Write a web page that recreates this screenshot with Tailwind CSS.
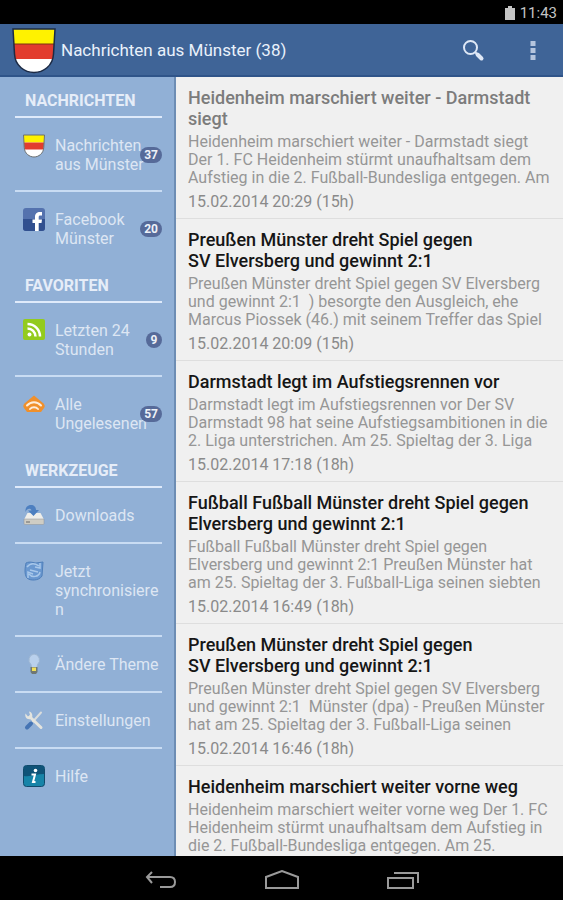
<!DOCTYPE html>
<html lang="de">
  <head>
    <meta charset="UTF-8" />
    <meta name="viewport" content="width=device-width, initial-scale=1.0" />
    <title>Nachrichten aus Münster</title>
    <script src="https://cdn.jsdelivr.net/npm/@tailwindcss/browser@4"></script>
  </head>
  <body class="h-screen flex flex-col overflow-hidden bg-black font-[Roboto,sans-serif]">
    <!-- status bar -->
    <div class="h-6 shrink-0 flex items-center justify-end gap-1 pr-1.5 pt-0.5 text-[15px] text-[#c4c4c4]">
      <svg class="w-3 h-4" viewBox="0 0 12 16" fill="#c4c4c4" aria-hidden="true">
        <path d="M4 1h4v2h3v12H1V3h3z" />
      </svg>
      <span>11:43</span>
    </div>

    <header class="h-[53px] shrink-0 flex items-center bg-[#3f6497] border-b-2 border-[#2f5489] pl-3 pr-1">
      <svg class="w-[44px] h-[48px]" viewBox="0 0 44 48" aria-hidden="true">
        <path d="M1 3h42l-1.500 25C41 40 31 46.500 22 46.500S3 40 2.500 28z" fill="#fff" />
        <path d="M1 3h42l-.9 15H1.900z" fill="#fff200" />
        <path d="M1.900 18h40.200l-.9 15H2.800z" fill="#e23c2e" />
        <path d="M1.900 18h40.200" stroke="#7a3410" />
        <path d="M1 3h42l-1.500 25C41 40 31 46.500 22 46.500S3 40 2.500 28z" fill="none" stroke="#1c2a44" stroke-width="1.500" />
      </svg>
      <h1 class="flex-1 pl-[5px] pt-0.5 text-[17px] text-[#e9f1fb]">Nachrichten aus Münster (38)</h1>
      <button class="w-[68px] h-12 flex items-center justify-center" aria-label="Suchen">
        <svg class="w-6 h-6" viewBox="0 0 24 24" fill="none" stroke="#dfe8f6" aria-hidden="true">
          <circle cx="9.500" cy="9.500" r="6.500" stroke-width="2" />
          <path d="M14 14l2.500 2.500" stroke-width="2" />
          <path d="M16.500 16.500l4 4" stroke-width="4" stroke-linecap="round" />
        </svg>
      </button>
      <button class="w-[52px] h-12 flex items-center justify-center" aria-label="Mehr Optionen">
        <svg class="w-[6px] h-5" viewBox="0 0 6 20" fill="#b5c5de" aria-hidden="true">
          <path d="M0.500 1h5v5h-5zM0.500 8h5v5h-5zM0.500 15h5v5h-5z" />
        </svg>
      </button>
    </header>

    <div class="flex-1 min-h-0 flex">
      <nav class="w-44 shrink-0 overflow-hidden bg-[#91b0d6] border-r-2 border-[#6d8db4] pl-[15px] pr-3 pt-1 text-base leading-[19px] text-[#dde6f3]">
        <h2 class="h-[37px] flex items-center pl-2.5 pt-1 border-b-2 border-[#dfeafa] font-bold text-[#e6edf8]">NACHRICHTEN</h2>
        <ul>
          <li class="border-b-2 border-[#c9dcf3]">
            <a href="#" class="relative flex gap-2.5 pl-2 pt-[18px] pb-4">
              <svg class="w-[22px] h-6 -mt-0.5 shrink-0" viewBox="0 0 44 48" aria-hidden="true">
                <path d="M1 2h42l-1.500 25C41 39 31 46 22 46S3 39 2.500 27z" fill="#fff" />
                <path d="M1 2h42l-.9 15H1.900z" fill="#fff200" />
                <path d="M1.900 17h40.200l-.9 14H2.800z" fill="#e23c2e" />
                <path d="M1 2h42l-1.500 25C41 39 31 46 22 46S3 39 2.500 27z" fill="none" stroke="#6b6f70" stroke-width="2" />
              </svg>
              <span class="flex-1 min-w-0 whitespace-nowrap">Nachrichten<br />aus Münster</span>
              <span class="absolute right-0 top-[29px] px-1 h-4 min-w-4 rounded-full bg-[#566a99] text-xs leading-4 font-bold text-center text-[#edf1f8]">37</span>
            </a>
          </li>
          <li>
            <a href="#" class="relative flex gap-2.5 pl-2 py-[18px]">
              <svg class="w-[22px] h-6 -mt-0.5 shrink-0" viewBox="0 0 22 24" aria-hidden="true">
                <rect x="0" y="0" width="22" height="23" rx="3" fill="#5472ae" />
                <path d="M0 11h22v9a3 3 0 0 1-3 3H3a3 3 0 0 1-3-3z" fill="#31508f" />
                <path d="M12 23v-8H9.500v-3.500H12V9c0-3.500 2-5 5-5h2v3.500h-1.500c-1.500 0-1.800.6-1.800 1.800v2.200H19l-.5 3.500h-2.800v8z" fill="#fff" />
              </svg>
              <span class="flex-1 min-w-0 whitespace-nowrap">Facebook<br />Münster</span>
              <span class="absolute right-0 top-[29px] px-1 h-4 min-w-4 rounded-full bg-[#566a99] text-xs leading-4 font-bold text-center text-[#edf1f8]">20</span>
            </a>
          </li>
        </ul>

        <h2 class="h-[37px] flex items-center pl-2.5 pt-1 border-b-2 border-[#dfeafa] font-bold text-[#e6edf8]">FAVORITEN</h2>
        <ul>
          <li class="border-b-2 border-[#c9dcf3]">
            <a href="#" class="relative flex gap-2.5 pl-2 pt-[18px] pb-4">
              <svg class="w-[22px] h-[22px] -mt-0.5 shrink-0" viewBox="0 0 22 22" fill="none" stroke="#fff" stroke-width="2.500" aria-hidden="true">
                <rect x="0" y="0" width="22" height="21" rx="2" fill="#93cb1e" stroke="none" />
                <circle cx="6.500" cy="15.500" r="2" fill="#fff" stroke="none" />
                <path d="M4.500 9.500a8 8 0 0 1 8 8M4.500 5a12.500 12.500 0 0 1 12.500 12.500" />
              </svg>
              <span class="flex-1 min-w-0 whitespace-nowrap">Letzten 24<br />Stunden</span>
              <span class="absolute right-0 top-[29px] px-1 h-4 min-w-4 rounded-full bg-[#566a99] text-xs leading-4 font-bold text-center text-[#edf1f8]">9</span>
            </a>
          </li>
          <li>
            <a href="#" class="relative flex gap-2.5 pl-2 py-[18px]">
              <svg class="w-[22px] h-[22px] shrink-0" viewBox="0 0 22 22" fill="none" stroke="#fdeedd" stroke-width="2" aria-hidden="true">
                <path d="M11 .5l3 2.500 6.500 5.500c1.500 1.500 1.500 3 .5 4.500L18 17H4l-3-4C0 11.500 0 10 1.500 8.500L8 3z" fill="#f0902c" stroke="none" />
                <path d="M4 10.500c4-4.500 10-4.500 14 0M7 14c2-2.500 6-2.500 8 0" stroke-linecap="round" />
              </svg>
              <span class="flex-1 min-w-0 whitespace-nowrap">Alle<br />Ungelesenen</span>
              <span class="absolute right-0 top-[29px] px-1 h-4 min-w-4 rounded-full bg-[#566a99] text-xs leading-4 font-bold text-center text-[#edf1f8]">57</span>
            </a>
          </li>
        </ul>

        <h2 class="h-[37px] flex items-center pl-2.5 pt-1 border-b-2 border-[#dfeafa] font-bold text-[#e6edf8]">WERKZEUGE</h2>
        <ul>
          <li class="border-b-2 border-[#c9dcf3]">
            <a href="#" class="flex items-center gap-2.5 pl-2 h-[54px]">
              <svg class="w-[22px] h-[22px] shrink-0" viewBox="0 0 22 22" aria-hidden="true">
                <path d="M4.500 9h13l3.500 6.500H1z" fill="#efeeea" />
                <path d="M1 15h20v4.500a1 1 0 0 1-1 1H2a1 1 0 0 1-1-1z" fill="#cfcdc4" stroke="#8f9298" stroke-width=".5" />
                <path d="M3 18h4" stroke="#666" />
                <path d="M2.500 8C2 3 5 1 8 1s5 2 5 5h3l-5.500 6L5 6.500h3.500C8 4 4 4 2.500 8z" fill="#4d7fc0" />
              </svg>
              <span class="flex-1 min-w-0">Downloads</span>
            </a>
          </li>
          <li class="border-b-2 border-[#c9dcf3]">
            <a href="#" class="flex gap-2.5 pl-2 pt-[18px] pb-4">
              <svg class="w-[22px] h-[22px] -mt-0.5 shrink-0" viewBox="0 0 22 22" fill="none" aria-hidden="true">
                <path d="M3 3c4-2 8 0 10 0l7-1-1 14c-3 5-12 5-15 2C1 14 2 8 3 3z" fill="#6a98d0" stroke="#4f7fba" />
                <path d="M4 7c4-5 9-3 12-1M17 3v5l-5-1M17 12c-1 5-8 6-11 2M5 18v-6l5 2M7 10l8 2" stroke="#a9c8ea" stroke-width="1.500" />
              </svg>
              <span class="flex-1 min-w-0 break-words">Jetzt synchronisieren</span>
            </a>
          </li>
          <li class="border-b-2 border-[#c9dcf3]">
            <a href="#" class="flex items-center gap-2.5 pl-2 h-[54px]">
              <svg class="w-[22px] h-[22px] shrink-0" viewBox="0 0 22 22" aria-hidden="true">
                <path d="M11 1a6 6 0 0 1 3.500 10.500L14 15H8.500L8 11.500A6 6 0 0 1 11 1z" fill="#b9d0ec" stroke="#9db6d2" />
                <path d="M7.500 14h7v5L13 21H9l-1.500-2z" fill="#6f7774" />
                <path d="M9 14.500h4V18H9z" fill="#f2e05a" />
              </svg>
              <span class="flex-1 min-w-0 whitespace-nowrap">Ändere Theme</span>
            </a>
          </li>
          <li class="border-b-2 border-[#c9dcf3]">
            <a href="#" class="flex items-center gap-2.5 pl-2 h-[54px]">
              <svg class="w-[22px] h-[22px] shrink-0" viewBox="0 0 22 22" fill="none" stroke-linecap="round" aria-hidden="true">
                <path d="M18 3.500l-8 9" stroke="#d9dcdc" stroke-width="2" />
                <path d="M8 14.500l-4 4" stroke="#4574b4" stroke-width="4" />
                <path d="M7 8l11 10.500" stroke="#e4e4de" stroke-width="3" />
                <path d="M2.500 4.500C1.500 8 4 11 7.500 10 10 9 10 5 7.500 3L6 2.500 7 6 5 7.500z" fill="#e4e4de" />
              </svg>
              <span class="flex-1 min-w-0">Einstellungen</span>
            </a>
          </li>
          <li>
            <a href="#" class="flex items-center gap-2.5 pl-2 h-[54px]">
              <svg class="w-[22px] h-[22px] shrink-0" viewBox="0 0 22 22" aria-hidden="true">
                <rect x="0.500" y="0.500" width="21" height="21" rx="3" fill="#1784a8" stroke="#114a6b" />
                <path d="M1 1h20v8C14 9 8 12 1 11z" fill="#0f5378" />
                <circle cx="12.500" cy="5.500" r="1.800" fill="#fff" />
                <path d="M8.500 9.500h3.500l-2 7.500h2.500" fill="none" stroke="#fff" stroke-width="2" />
              </svg>
              <span class="flex-1 min-w-0">Hilfe</span>
            </a>
          </li>
        </ul>
      </nav>

      <main class="flex-1 min-w-0 overflow-hidden bg-[#f0f0f0] text-base leading-[18px] text-[#969696]">
        <article class="px-3 pt-2.5 pb-[7px] border-b border-[#dedede]">
          <h3 class="text-lg leading-[21px] font-medium text-[#7c7c7c]">Heidenheim marschiert weiter - Darmstadt<br />siegt</h3>
          <p class="pt-1 whitespace-nowrap">Heidenheim marschiert weiter - Darmstadt siegt<br />Der 1. FC Heidenheim stürmt unaufhaltsam dem<br />Aufstieg in die 2. Fußball-Bundesliga entgegen. Am</p>
          <p class="pt-1.5 text-[#8a8a8a]">15.02.2014 20:29 (15h)</p>
        </article>
        <article class="px-3 pt-2.5 pb-[7px] border-b border-[#dedede]">
          <h3 class="text-lg leading-[21px] font-medium text-[#161616]">Preußen Münster dreht Spiel gegen<br />SV Elversberg und gewinnt 2:1</h3>
          <p class="pt-1 whitespace-nowrap">Preußen Münster dreht Spiel gegen SV Elversberg<br />und gewinnt 2:1 &nbsp;) besorgte den Ausgleich, ehe<br />Marcus Piossek (46.) mit seinem Treffer das Spiel</p>
          <p class="pt-1.5 text-[#8a8a8a]">15.02.2014 20:09 (15h)</p>
        </article>
        <article class="px-3 pt-2.5 pb-[7px] border-b border-[#dedede]">
          <h3 class="text-lg leading-[21px] font-medium text-[#161616]">Darmstadt legt im Aufstiegsrennen vor</h3>
          <p class="pt-1 whitespace-nowrap">Darmstadt legt im Aufstiegsrennen vor Der SV<br />Darmstadt 98 hat seine Aufstiegsambitionen in die<br />2. Liga unterstrichen. Am 25. Spieltag der 3. Liga</p>
          <p class="pt-1.5 text-[#8a8a8a]">15.02.2014 17:18 (18h)</p>
        </article>
        <article class="px-3 pt-2.5 pb-[7px] border-b border-[#dedede]">
          <h3 class="text-lg leading-[21px] font-medium text-[#161616]">Fußball Fußball Münster dreht Spiel gegen<br />Elversberg und gewinnt 2:1</h3>
          <p class="pt-1 whitespace-nowrap">Fußball Fußball Münster dreht Spiel gegen<br />Elversberg und gewinnt 2:1 Preußen Münster hat<br />am 25. Spieltag der 3. Fußball-Liga seinen siebten</p>
          <p class="pt-1.5 text-[#8a8a8a]">15.02.2014 16:49 (18h)</p>
        </article>
        <article class="px-3 pt-2.5 pb-[7px] border-b border-[#dedede]">
          <h3 class="text-lg leading-[21px] font-medium text-[#161616]">Preußen Münster dreht Spiel gegen<br />SV Elversberg und gewinnt 2:1</h3>
          <p class="pt-1 whitespace-nowrap">Preußen Münster dreht Spiel gegen SV Elversberg<br />und gewinnt 2:1 &nbsp;Münster (dpa) - Preußen Münster<br />hat am 25. Spieltag der 3. Fußball-Liga seinen</p>
          <p class="pt-1.5 text-[#8a8a8a]">15.02.2014 16:46 (18h)</p>
        </article>
        <article class="px-3 pt-2.5 pb-[7px]">
          <h3 class="text-lg leading-[21px] font-medium text-[#161616]">Heidenheim marschiert weiter vorne weg</h3>
          <p class="pt-1 whitespace-nowrap">Heidenheim marschiert weiter vorne weg Der 1. FC<br />Heidenheim stürmt unaufhaltsam dem Aufstieg in<br />die 2. Fußball-Bundesliga entgegen. Am 25.</p>
        </article>
      </main>
    </div>

    <!-- system navigation -->
    <footer class="h-11 shrink-0 flex items-center justify-center gap-[85px] pt-1">
      <button class="w-9 h-9 flex items-center justify-center" aria-label="Zurück">
        <svg class="w-8 h-5" viewBox="0 0 32 20" fill="none" stroke="#9a9a9a" stroke-width="2" aria-hidden="true">
          <path d="M7 2L2 7l5 6M2 7h23c3 0 5 2 5 5s-2 5-5 5H15" />
        </svg>
      </button>
      <button class="w-9 h-9 flex items-center justify-center" aria-label="Startseite">
        <svg class="w-9 h-5" viewBox="0 0 36 20" fill="none" stroke="#9a9a9a" stroke-width="2" aria-hidden="true">
          <path d="M2 18V7l16-6 16 6v11z" />
        </svg>
      </button>
      <button class="w-9 h-9 flex items-center justify-center" aria-label="Letzte Apps">
        <svg class="w-8 h-5" viewBox="0 0 32 20" fill="none" stroke="#9a9a9a" stroke-width="2" aria-hidden="true">
          <path d="M1 8h25v10H1zM7 3h24v10" />
        </svg>
      </button>
    </footer>
  </body>
</html>
